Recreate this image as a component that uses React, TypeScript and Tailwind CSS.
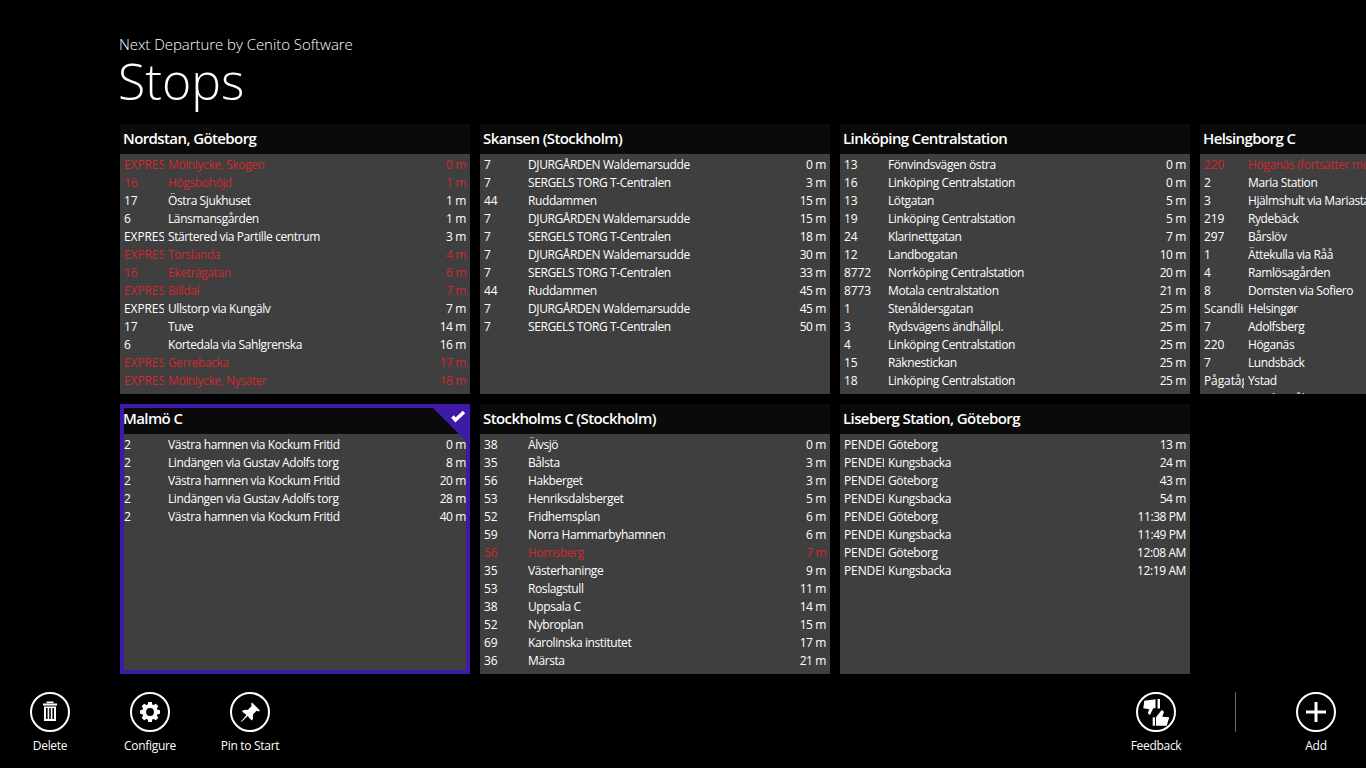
type Row = [string, string, string, boolean?];

const nordstan: Row[] = [
  ["EXPRESS", "Mölnlycke, Skogen", "0 m", true],
  ["16", "Högsbohöjd", "1 m", true],
  ["17", "Östra Sjukhuset", "1 m"],
  ["6", "Länsmansgården", "1 m"],
  ["EXPRESS", "Stärtered via Partille centrum", "3 m"],
  ["EXPRESS", "Torslanda", "4 m", true],
  ["16", "Eketrägatan", "6 m", true],
  ["EXPRESS", "Billdal", "7 m", true],
  ["EXPRESS", "Ullstorp via Kungälv", "7 m"],
  ["17", "Tuve", "14 m"],
  ["6", "Kortedala via Sahlgrenska", "16 m"],
  ["EXPRESS", "Gerrebacka", "17 m", true],
  ["EXPRESS", "Mölnlycke, Nysäter", "18 m", true],
];

const skansen: Row[] = [
  ["7", "DJURGÅRDEN Waldemarsudde", "0 m"],
  ["7", "SERGELS TORG T-Centralen", "3 m"],
  ["44", "Ruddammen", "15 m"],
  ["7", "DJURGÅRDEN Waldemarsudde", "15 m"],
  ["7", "SERGELS TORG T-Centralen", "18 m"],
  ["7", "DJURGÅRDEN Waldemarsudde", "30 m"],
  ["7", "SERGELS TORG T-Centralen", "33 m"],
  ["44", "Ruddammen", "45 m"],
  ["7", "DJURGÅRDEN Waldemarsudde", "45 m"],
  ["7", "SERGELS TORG T-Centralen", "50 m"],
];

const linkoping: Row[] = [
  ["13", "Fönvindsvägen östra", "0 m"],
  ["16", "Linköping Centralstation", "0 m"],
  ["13", "Lötgatan", "5 m"],
  ["19", "Linköping Centralstation", "5 m"],
  ["24", "Klarinettgatan", "7 m"],
  ["12", "Landbogatan", "10 m"],
  ["8772", "Norrköping Centralstation", "20 m"],
  ["8773", "Motala centralstation", "21 m"],
  ["1", "Stenåldersgatan", "25 m"],
  ["3", "Rydsvägens ändhållpl.", "25 m"],
  ["4", "Linköping Centralstation", "25 m"],
  ["15", "Räknestickan", "25 m"],
  ["18", "Linköping Centralstation", "25 m"],
];

const helsingborg: Row[] = [
  ["220", "Höganäs (fortsätter mot Mölle)", "0 m", true],
  ["2", "Maria Station", "1 m"],
  ["3", "Hjälmshult via Mariastaden", "2 m"],
  ["219", "Rydebäck", "3 m"],
  ["297", "Bårslöv", "3 m"],
  ["1", "Ättekulla via Råå", "4 m"],
  ["4", "Ramlösagården", "5 m"],
  ["8", "Domsten via Sofiero", "6 m"],
  ["Scandlines", "Helsingør", "7 m"],
  ["7", "Adolfsberg", "8 m"],
  ["220", "Höganäs", "9 m"],
  ["7", "Lundsbäck", "10 m"],
  ["Pågatåg", "Ystad", "11 m"],
  ["", "Lund via Åkarp", "12 m"],
];

const malmo: Row[] = [
  ["2", "Västra hamnen via Kockum Fritid", "0 m"],
  ["2", "Lindängen via Gustav Adolfs torg", "8 m"],
  ["2", "Västra hamnen via Kockum Fritid", "20 m"],
  ["2", "Lindängen via Gustav Adolfs torg", "28 m"],
  ["2", "Västra hamnen via Kockum Fritid", "40 m"],
];

const stockholm: Row[] = [
  ["38", "Älvsjö", "0 m"],
  ["35", "Bålsta", "3 m"],
  ["56", "Hakberget", "3 m"],
  ["53", "Henriksdalsberget", "5 m"],
  ["52", "Fridhemsplan", "6 m"],
  ["59", "Norra Hammarbyhamnen", "6 m"],
  ["56", "Hornsberg", "7 m", true],
  ["35", "Västerhaninge", "9 m"],
  ["53", "Roslagstull", "11 m"],
  ["38", "Uppsala C", "14 m"],
  ["52", "Nybroplan", "15 m"],
  ["69", "Karolinska institutet", "17 m"],
  ["36", "Märsta", "21 m"],
];

const liseberg: Row[] = [
  ["PENDEL", "Göteborg", "13 m"],
  ["PENDEL", "Kungsbacka", "24 m"],
  ["PENDEL", "Göteborg", "43 m"],
  ["PENDEL", "Kungsbacka", "54 m"],
  ["PENDEL", "Göteborg", "11:38 PM"],
  ["PENDEL", "Kungsbacka", "11:49 PM"],
  ["PENDEL", "Göteborg", "12:08 AM"],
  ["PENDEL", "Kungsbacka", "12:19 AM"],
];

function StopCard({ title, rows, selected = false }: { title: string; rows: Row[]; selected?: boolean }) {
  return (
    <div className="relative h-[270px] w-[350px] shrink-0 overflow-hidden bg-[#3f3f3f]">
      <div className="flex h-[30px] items-center bg-[#0a0a0a] pb-[2px] pl-[3px] text-[15px] font-semibold tracking-[-0.6px] text-white">{title}</div>
      <div className="pt-[2px]">
        {rows.map((row, i) => (
          <div
            key={i}
            className={`flex h-[18px] items-center whitespace-nowrap pl-[4px] pr-[4px] text-[12px] tracking-[-0.4px] ${row[3] ? "text-[#d0282d]" : "text-white"}`}
          >
            <span className="mr-[4px] w-[40px] shrink-0 overflow-hidden tracking-[-0.1px]">{row[0]}</span>
            <span className="flex-1">{row[1]}</span>
            <span className="text-right">{row[2]}</span>
          </div>
        ))}
      </div>
      {selected && (
        <>
          <div className="absolute inset-0 border-4 border-[#3f1aa8]" />
          <svg className="absolute right-0 top-0" width="41" height="41" viewBox="0 0 41 41">
            <polygon points="0,0 41,0 41,41" fill="#3f1aa8" />
            <path d="M23.5 12.5 L26.5 16 L35 8" fill="none" stroke="#fff" strokeWidth="3.5" />
          </svg>
        </>
      )}
    </div>
  );
}

function BarButton({ label, children }: { label: string; children: React.ReactNode }) {
  return (
    <div className="flex w-[100px] flex-col items-center">
      <div className="flex h-10 w-10 items-center justify-center rounded-full border-2 border-white">{children}</div>
      <span className="mt-[5px] text-[12px] leading-[18px] tracking-[-0.3px] text-white">{label}</span>
    </div>
  );
}

export default function App() {
  return (
    <div className="flex h-[768px] w-[1366px] flex-col overflow-hidden bg-black font-['Open_Sans','Noto_Sans',sans-serif] text-white">
      <header className="h-[124px] pl-[119px] pt-[34px]">
        <div className="text-[15px] font-light leading-[20px] tracking-[-0.05px]">Next Departure by Cenito Software</div>
        <h1 className="-ml-[1px] mt-[1px] text-[50px] font-light leading-[52px]">Stops</h1>
      </header>

      <main className="flex flex-1 gap-[10px] pl-[120px]">
        <div className="flex w-[350px] shrink-0 flex-col gap-[10px]">
          <StopCard title="Nordstan, Göteborg" rows={nordstan} />
          <StopCard title="Malmö C" rows={malmo} selected />
        </div>
        <div className="flex w-[350px] shrink-0 flex-col gap-[10px]">
          <StopCard title="Skansen (Stockholm)" rows={skansen} />
          <StopCard title="Stockholms C (Stockholm)" rows={stockholm} />
        </div>
        <div className="flex w-[350px] shrink-0 flex-col gap-[10px]">
          <StopCard title="Linköping Centralstation" rows={linkoping} />
          <StopCard title="Liseberg Station, Göteborg" rows={liseberg} />
        </div>
        <div className="flex w-[350px] shrink-0 flex-col gap-[10px]">
          <StopCard title="Helsingborg C" rows={helsingborg} />
        </div>
      </main>

      {/* App bar */}
      <footer className="flex h-[94px] pt-[18px]">
        <BarButton label="Delete">
          <svg width="20" height="22" viewBox="0 0 20 22" fill="#fff">
            <rect x="6.5" y="0.5" width="7" height="1.6" />
            <rect x="3" y="2.5" width="14" height="2" />
            <path d="M4 5.5h12V20H4z M6 7v11h1.6V7z M9.2 7v11h1.6V7z M12.4 7v11H14V7z" fillRule="evenodd" />
          </svg>
        </BarButton>
        <BarButton label="Configure">
          <svg width="20" height="20" viewBox="0 0 22 22" fill="#fff">
            <path
              fillRule="evenodd"
              d="M9 0h4l.5 2.7 1.6.7 2.3-1.6 2.8 2.8-1.6 2.3.7 1.6L22 9v4l-2.7.5-.7 1.6 1.6 2.3-2.8 2.8-2.3-1.6-1.6.7L13 22H9l-.5-2.7-1.6-.7-2.3 1.6-2.8-2.8 1.6-2.3-.7-1.6L0 13V9l2.7-.5.7-1.6-1.6-2.3 2.8-2.8 2.3 1.6 1.6-.7z M11 6.7a4.3 4.3 0 1 0 0 8.6 4.3 4.3 0 0 0 0-8.6z"
            />
          </svg>
        </BarButton>
        <BarButton label="Pin to Start">
          <svg width="22" height="22" viewBox="0 0 22 22" fill="#fff">
            <path d="M13 1.5 L21 9.5 L19.5 10.5 L17.5 9.8 L14 13.5 L14 18 L12.5 19.5 L8.7 15 L2.5 21 L2 20.5 L7.5 14 L3 10.5 L4.5 9 L9 8.7 L12.7 5 L12 3 Z" />
          </svg>
        </BarButton>
        <div className="flex-1" />
        <BarButton label="Feedback">
          <svg width="34" height="34" viewBox="0 0 34 34" fill="#fff">
            <path d="M5.3 5.7 L16.5 4.3 L16.5 13.3 L14.3 13.3 L11 20 L8.7 18.3 L10.3 14.3 L4.3 13.3 Z" />
            <rect x="18.5" y="4" width="2.5" height="9.5" />
            <path d="M17 22.3 L22.7 15 L25 16.7 L23.3 21.7 L30.3 22.3 L27.7 30.7 L17 30.7 Z" />
            <rect x="13.7" y="22.3" width="2.3" height="8.4" />
          </svg>
        </BarButton>
        <div className="ml-[29px] mr-[30px] h-10 w-px bg-[#6a6a6a]" />
        <BarButton label="Add">
          <svg width="20" height="20" viewBox="0 0 20 20" fill="#fff">
            <rect x="0" y="8.5" width="20" height="3" />
            <rect x="8.5" y="0" width="3" height="20" />
          </svg>
        </BarButton>
      </footer>
    </div>
  );
}
